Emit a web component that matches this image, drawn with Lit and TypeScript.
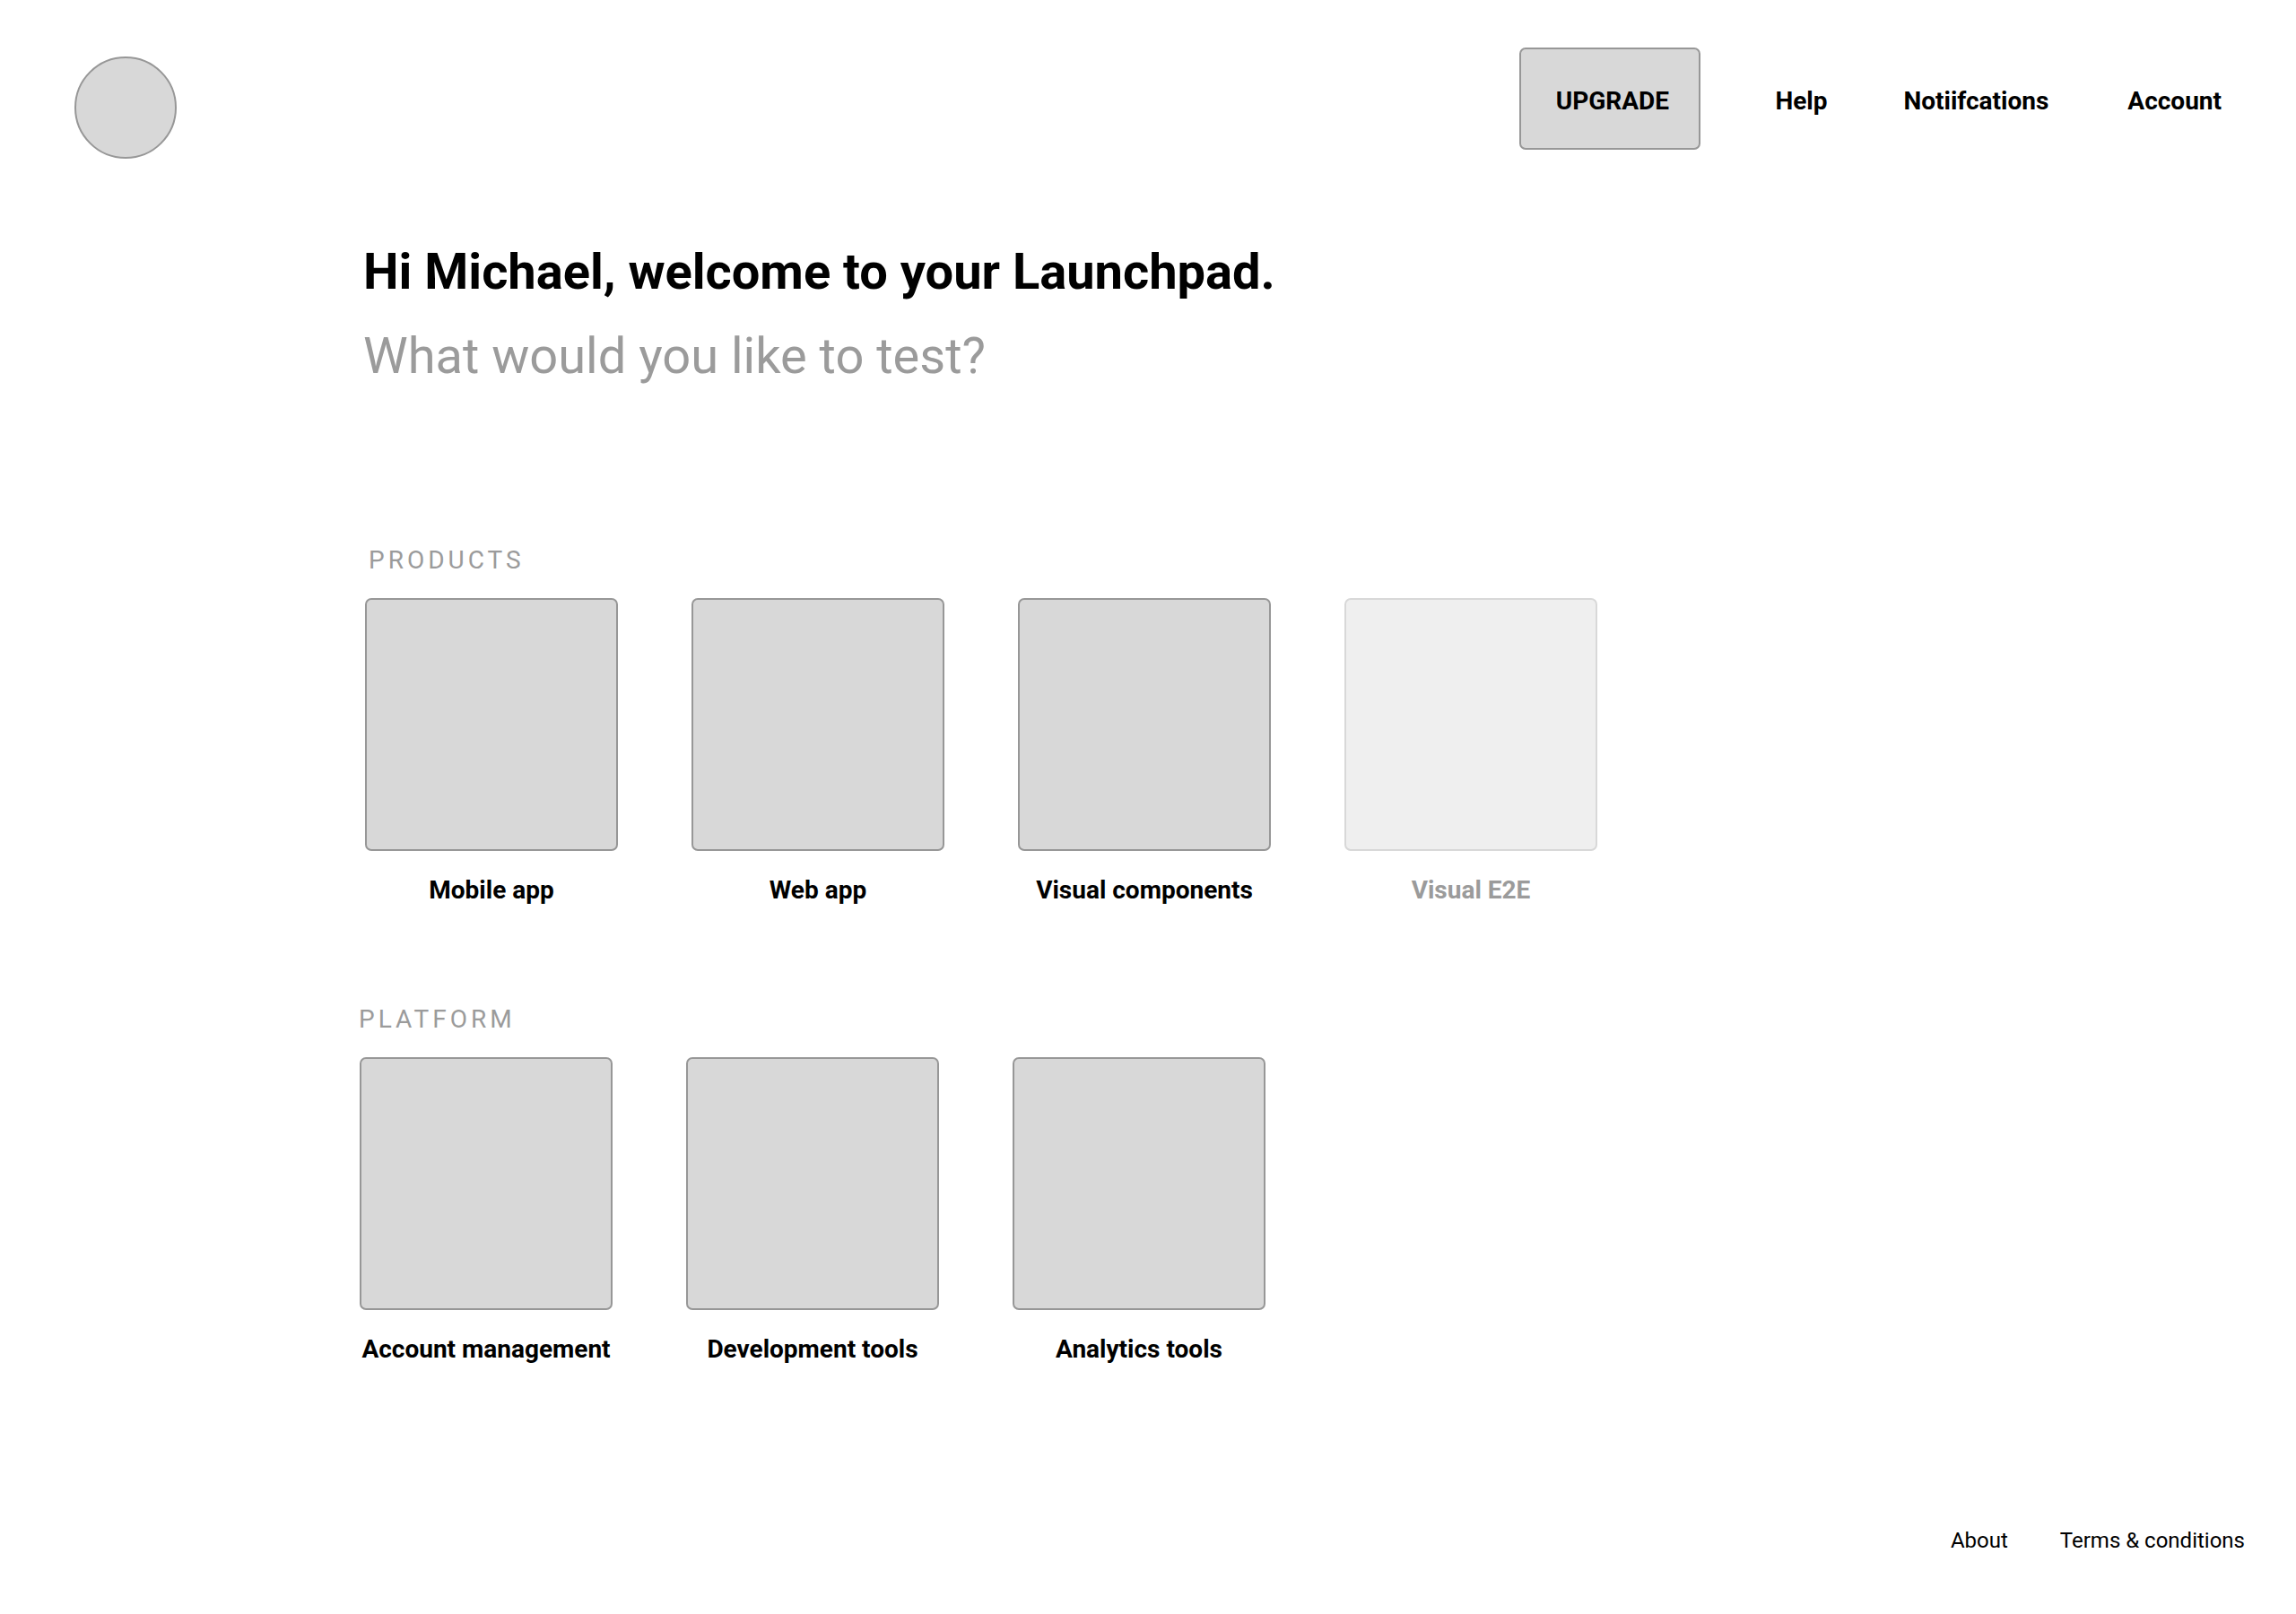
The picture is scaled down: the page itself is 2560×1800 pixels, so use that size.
import { LitElement, html, css } from "lit";
import { customElement } from "lit/decorators.js";

const products = [
  { label: "Mobile app" },
  { label: "Web app" },
  { label: "Visual components" },
  { label: "Visual E2E", disabled: true },
];
const platform = [
  { label: "Account management" },
  { label: "Development tools" },
  { label: "Analytics tools" },
];

@customElement("app-root")
export class AppRoot extends LitElement {
  static styles = css`
    :host {
      width: 2560px;
      height: 1800px;
      background: #fff;
      color: #000;
      font-family: Roboto, "Liberation Sans", sans-serif;
      display: flex;
      flex-direction: column;
    }
    header {
      display: flex;
      align-items: flex-start;
      justify-content: space-between;
      padding: 53px 83px 0 83px;
    }
    .logo {
      box-sizing: border-box;
      width: 114px;
      height: 114px;
      margin-top: 10px;
      border-radius: 50%;
      background: #d8d8d8;
      border: 2px solid #979797;
    }
    nav {
      display: flex;
      align-items: center;
      font-size: 28px;
      font-weight: 700;
    }
    .upgrade {
      box-sizing: border-box;
      width: 202px;
      height: 114px;
      padding: 4px 0 0 5px;
      margin-right: 83px;
      display: flex;
      align-items: center;
      justify-content: center;
      background: #d8d8d8;
      border: 2px solid #979797;
      border-radius: 7px;
    }
    .link {
      padding-top: 4px;
    }
    .help {
      margin-right: 85px;
    }
    .notifications {
      margin-right: 88px;
    }
    main {
      padding-left: 405px;
      flex: 1;
    }
    h1 {
      margin: 93px 0 0;
      font-size: 56px;
      line-height: 66px;
      font-weight: 700;
    }
    h2 {
      margin: 28px 0 0;
      font-size: 56px;
      line-height: 66px;
      font-weight: 400;
      color: #9b9b9b;
    }
    .section {
      display: flex;
      flex-direction: column;
    }
    .products {
      margin: 178px 0 0 2px;
    }
    .platform {
      margin: 110px 0 0 -4px;
    }
    .section-title {
      font-size: 28px;
      line-height: 34px;
      letter-spacing: 4px;
      color: #9b9b9b;
      margin-bottom: 25px;
      margin-left: 4px;
    }
    .platform .section-title {
      margin-left: -1px;
    }
    .tiles {
      display: flex;
      gap: 82px;
    }
    .tile {
      width: 282px;
      display: flex;
      flex-direction: column;
      align-items: center;
      font-size: 28px;
      line-height: 34px;
      font-weight: 700;
    }
    .box {
      box-sizing: border-box;
      width: 282px;
      height: 282px;
      margin-bottom: 27px;
      background: #d8d8d8;
      border: 2px solid #979797;
      border-radius: 7px;
    }
    .tile span {
      white-space: nowrap;
    }
    .tile.disabled {
      color: #9b9b9b;
    }
    .tile.disabled .box {
      background: #efefef;
      border-color: #d8d8d8;
    }
    footer {
      display: flex;
      justify-content: flex-end;
      gap: 58px;
      padding: 0 57px 68px 0;
      font-size: 24px;
      line-height: 28px;
    }
  `;

  private tile(t: { label: string; disabled?: boolean }) {
    return html`<div class="tile ${t.disabled ? "disabled" : ""}">
      <div class="box"></div>
      <span>${t.label}</span>
    </div>`;
  }

  render() {
    return html`
      <header>
        <div class="logo"></div>
        <nav>
          <div class="upgrade">UPGRADE</div>
          <div class="link help">Help</div>
          <div class="link notifications">Notiifcations</div>
          <div class="link">Account</div>
        </nav>
      </header>
      <main>
        <h1>Hi Michael, welcome to your Launchpad.</h1>
        <h2>What would you like to test?</h2>
        <section class="section products">
          <div class="section-title">PRODUCTS</div>
          <div class="tiles">${products.map((t) => this.tile(t))}</div>
        </section>
        <section class="section platform">
          <div class="section-title">PLATFORM</div>
          <div class="tiles">${platform.map((t) => this.tile(t))}</div>
        </section>
      </main>
      <footer>
        <div>About</div>
        <div>Terms &amp; conditions</div>
      </footer>
    `;
  }
}
